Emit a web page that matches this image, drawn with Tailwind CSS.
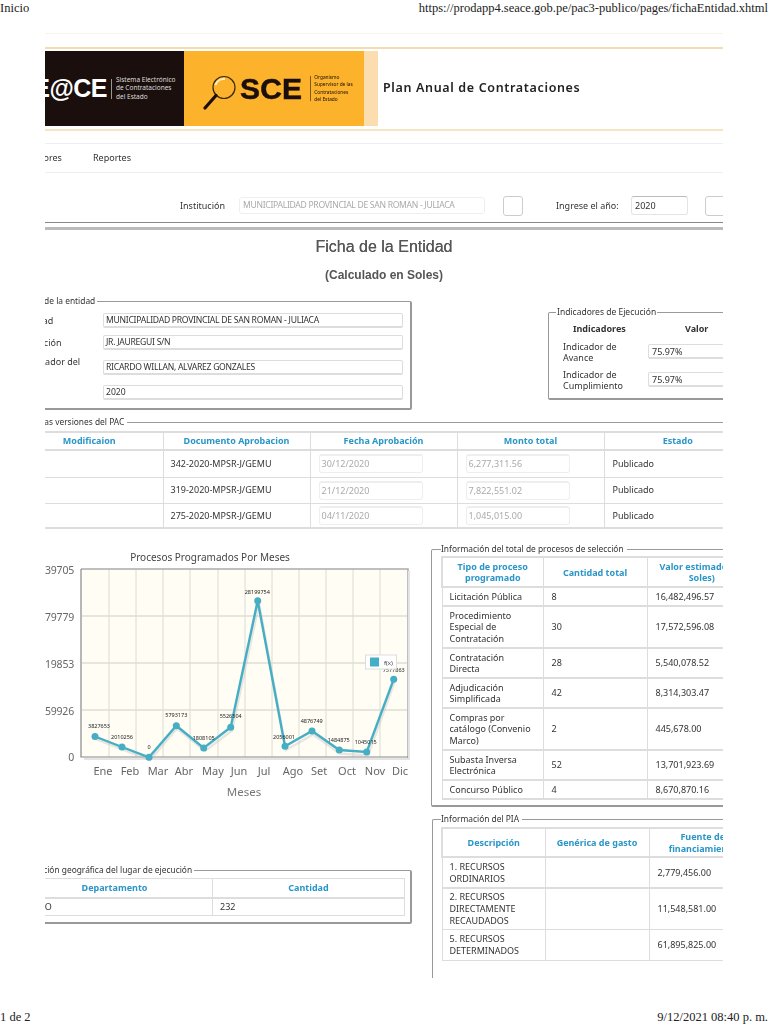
<!DOCTYPE html>
<html lang="es">
<head>
  <meta charset="UTF-8" />
  <title>Ficha de la Entidad</title>
  <script src="https://cdn.jsdelivr.net/npm/@tailwindcss/browser@4"></script>
</head>
<body class="bg-white">
<div class="w-[768px] h-[1024px] overflow-hidden flex flex-col justify-between font-['Noto_Sans',sans-serif] text-[9px] text-[#333]">

  <!-- print header -->
  <div class="h-[16px] flex justify-between font-['Liberation_Serif',serif] text-[12.5px] leading-[16px] text-[#222]">
    <span>Inicio</span>
    <span>https://prodapp4.seace.gob.pe/pac3-publico/pages/fichaEntidad.xhtml</span>
  </div>

  <!-- page -->
  <div class="ml-[45px] w-[678px] h-[945px] mb-auto mt-[17px] overflow-hidden blur-[0.45px]">
    <div class="h-px bg-[#f8f4ea]"></div>
    <div class="mt-[13px] h-[2px] bg-[#f3dcb4]"></div>

    <!-- banner -->
    <div class="mt-[2px] h-[75px] flex items-stretch">
      <div class="w-[139px] bg-[#1a0f0c] flex items-center justify-end overflow-hidden text-white">
        <span class="font-['Liberation_Sans',sans-serif] font-bold text-[25px] tracking-[-0.5px] shrink-0">SE@CE</span>
        <span class="w-px h-[20px] bg-[#998] mx-[4px] shrink-0"></span>
        <span class="w-[68px] shrink-0 text-[6.5px] leading-[8.5px] text-[#ddd] whitespace-nowrap">Sistema Electrónico<br>de Contrataciones<br>del Estado</span>
      </div>
      <div class="w-[180px] bg-[#fdb22b] flex items-center text-[#1a0f0c] pl-[19px]">
        <svg width="36" height="42" viewBox="0 0 36 42" class="shrink-0">
          <circle cx="21" cy="19.500" r="11" fill="#fdb22b" stroke="#3a2a10" stroke-width="1.2" />
          <path d="M12.500 17 A9 9 0 0 1 22 11" fill="none" stroke="#fff0c4" stroke-width="2" />
          <path d="M13 27.500 L2 40" stroke="#1a0f0c" stroke-width="3.200" stroke-linecap="round" />
        </svg>
        <span class="font-['Liberation_Sans',sans-serif] font-bold text-[30px] tracking-[0.2px] ml-[1px] shrink-0 [-webkit-text-stroke:0.5px_#1a0f0c]">SCE</span>
        <span class="w-px h-[25px] bg-[#7a5a14] ml-[8px] mr-[3px] shrink-0"></span>
        <span class="text-[4.800px] leading-[7.300px] whitespace-nowrap">Organismo<br>Supervisor de las<br>Contrataciones<br>del Estado</span>
      </div>
      <div class="w-[14px] bg-[#fcddaf]"></div>
      <div class="pl-[5px] self-center font-semibold text-[12.500px] text-[#222] tracking-[0.65px]">Plan Anual de Contrataciones</div>
    </div>
    <div class="mt-[3px] h-[2px] bg-[#f6e4c6]"></div>

    <!-- nav -->
    <div class="mt-[12px] h-[30px] border-y border-[#eee] flex items-center">
      <span class="-ml-[36px] w-[84px] shrink-0">Proveedores</span>
      <span>Reportes</span>
    </div>

    <!-- filter -->
    <div class="mt-[24px] h-[17px] flex items-center">
      <span class="ml-[135px] w-[59px] shrink-0">Institución</span>
      <div class="w-[246px] h-[17px] shrink-0 rounded-[3px] border border-[#eee] px-[3px] leading-[15px] text-[8.600px] tracking-[-0.3px] text-[#aaa] whitespace-nowrap">MUNICIPALIDAD PROVINCIAL DE SAN ROMAN - JULIACA</div>
      <div class="ml-[18px] w-[20px] h-[20px] shrink-0 rounded-[3px] border border-[#ccc]"></div>
      <span class="ml-[33px] w-[75px] shrink-0">Ingrese el año:</span>
      <div class="w-[57px] h-[19px] shrink-0 rounded-[3px] border border-[#e4e4e4] border-t-[#bbb] px-[3px] leading-[17px]">2020</div>
      <div class="ml-[17px] w-[24px] h-[20px] shrink-0 rounded-[3px] border border-[#ccc]"></div>
    </div>

    <div class="mt-[8px] h-px bg-[#888]"></div>
    <div class="mt-[4px] h-[3px] bg-[#bbb]"></div>

    <!-- titles -->
    <h1 class="mt-[8px] h-[18px] leading-[18px] text-center font-['Liberation_Sans',sans-serif] text-[16px] text-[#555] font-medium [text-shadow:0_0_0.6px_#555]">Ficha de la Entidad</h1>
    <h2 class="mt-[11px] h-[16px] leading-[16px] text-center font-['Liberation_Sans',sans-serif] text-[12px] font-bold text-[#555]">(Calculado en Soles)</h2>

    <!-- entity data + indicators -->
    <div class="flex items-start h-[117px] mt-[12px]">
      <fieldset class="-ml-[60px] w-[427px] h-[115px] shrink-0 border border-[#999] border-b-2 border-r-2 rounded-[2px]">
        <legend class="ml-[33px] leading-[12px] pr-[2px] text-[8.400px]">Datos de la entidad</legend>
        <div class="mt-[6px] flex items-center h-[15px]">
          <span class="w-[117px] pl-[35px] shrink-0">Entidad</span>
          <div class="w-[300px] h-[15px] rounded-[2px] border border-[#ddd] border-b-2 px-[2px] leading-[13px] text-[8.600px] tracking-[-0.27px] whitespace-nowrap">MUNICIPALIDAD PROVINCIAL DE SAN ROMAN - JULIACA</div>
        </div>
        <div class="mt-[7px] flex items-center h-[15px]">
          <span class="w-[117px] pl-[36px] shrink-0">Dirección</span>
          <div class="w-[300px] h-[15px] rounded-[2px] border border-[#ddd] border-b-2 px-[2px] leading-[13px] text-[8.600px] tracking-[-0.27px]">JR. JAUREGUI S/N</div>
        </div>
        <div class="mt-[10px] flex items-start h-[15px]">
          <span class="w-[117px] pl-[33px] shrink-0 leading-[12px] -mt-[4px]">Agrupador del</span>
          <div class="w-[300px] h-[15px] rounded-[2px] border border-[#ddd] border-b-2 px-[2px] leading-[13px] text-[8.600px] tracking-[-0.27px] whitespace-nowrap">RICARDO WILLAN, ALVAREZ GONZALES</div>
        </div>
        <div class="mt-[10px] flex items-center h-[15px]">
          <span class="w-[117px] pl-[36px] shrink-0">Año</span>
          <div class="w-[300px] h-[15px] rounded-[2px] border border-[#ddd] border-b-2 px-[2px] leading-[13px] text-[8.600px]">2020</div>
        </div>
      </fieldset>

      <fieldset class="ml-[136px] mt-[11px] w-[200px] h-[94px] shrink-0 border border-[#999] border-b-2 rounded-[2px]">
        <legend class="ml-[7px] leading-[12px] px-px text-[8.500px]">Indicadores de Ejecución</legend>
        <div class="flex h-[15px] mt-[3px] font-bold items-center">
          <span class="ml-[24px] w-[112px]">Indicadores</span>
          <span>Valor</span>
        </div>
        <div class="flex items-center h-[23px] mt-[4px] leading-[11px]">
          <span class="ml-[14px] w-[85px] shrink-0">Indicador de<br>Avance</span>
          <div class="w-[90px] h-[15px] shrink-0 rounded-[2px] border border-[#ddd] border-b-2 px-[3px] leading-[13px]">75.97%</div>
        </div>
        <div class="flex items-center h-[23px] mt-[5px] leading-[11px]">
          <span class="ml-[14px] w-[85px] shrink-0">Indicador de<br>Cumplimiento</span>
          <div class="w-[90px] h-[15px] shrink-0 rounded-[2px] border border-[#ddd] border-b-2 px-[3px] leading-[13px]">75.97%</div>
        </div>
      </fieldset>
    </div>

    <!-- PAC versions -->
    <fieldset class="mt-[4px] -ml-[60px] w-[800px] border-t border-[#999]">
      <legend class="ml-[38px] leading-[12px] pr-[3px] text-[8.400px]">Últimas versiones del PAC</legend>
      <table class="ml-[31px] mt-[3px] w-[735px] table-fixed border-collapse">
        <thead>
          <tr class="h-[18px] text-[#2a96c8] font-bold">
            <th class="border-y-2 border-[#ddd] border-r">Modificaion</th>
            <th class="border-y-2 border-[#ddd] border-r">Documento Aprobacion</th>
            <th class="border-y-2 border-[#ddd] border-r">Fecha Aprobación</th>
            <th class="border-y-2 border-[#ddd] border-r">Monto total</th>
            <th class="border-y-2 border-[#ddd]">Estado</th>
          </tr>
        </thead>
        <tbody>
          <tr class="h-[27px] border-b border-[#ddd]">
            <td class="border-r border-[#ddd]"></td>
            <td class="border-r border-[#ddd] pl-[7px]">342-2020-MPSR-J/GEMU</td>
            <td class="border-r border-[#ddd] pl-[8px]"><div class="w-[104px] h-[19px] rounded-[3px] border border-[#eee] border-t-2 px-[2px] leading-[16px] text-[#aaa]">30/12/2020</div></td>
            <td class="border-r border-[#ddd] pl-[8px]"><div class="w-[104px] h-[19px] rounded-[3px] border border-[#eee] border-t-2 px-[2px] leading-[16px] text-[#aaa]">6,277,311.56</div></td>
            <td class="pl-[8px]">Publicado</td>
          </tr>
          <tr class="h-[26px] border-b border-[#ddd]">
            <td class="border-r border-[#ddd]"></td>
            <td class="border-r border-[#ddd] pl-[7px]">319-2020-MPSR-J/GEMU</td>
            <td class="border-r border-[#ddd] pl-[8px]"><div class="w-[104px] h-[19px] rounded-[3px] border border-[#eee] border-t-2 px-[2px] leading-[16px] text-[#aaa]">21/12/2020</div></td>
            <td class="border-r border-[#ddd] pl-[8px]"><div class="w-[104px] h-[19px] rounded-[3px] border border-[#eee] border-t-2 px-[2px] leading-[16px] text-[#aaa]">7,822,551.02</div></td>
            <td class="pl-[8px]">Publicado</td>
          </tr>
          <tr class="h-[25px] border-b-2 border-[#ddd]">
            <td class="border-r border-[#ddd]"></td>
            <td class="border-r border-[#ddd] pl-[7px]">275-2020-MPSR-J/GEMU</td>
            <td class="border-r border-[#ddd] pl-[8px]"><div class="w-[104px] h-[19px] rounded-[3px] border border-[#eee] border-t-2 px-[2px] leading-[16px] text-[#aaa]">04/11/2020</div></td>
            <td class="border-r border-[#ddd] pl-[8px]"><div class="w-[104px] h-[19px] rounded-[3px] border border-[#eee] border-t-2 px-[2px] leading-[16px] text-[#aaa]">1,045,015.00</div></td>
            <td class="pl-[8px]">Publicado</td>
          </tr>
        </tbody>
      </table>
    </fieldset>

    <!-- lower columns -->
    <div class="flex items-start">
      <div class="w-[387px] shrink-0">
        <svg class="mt-[11px] block" width="385" height="260" viewBox="45 540 385 260" font-family="Noto Sans, sans-serif">
          <text x="210" y="561" text-anchor="middle" font-size="10" fill="#444">Procesos Programados Por Meses</text>
          <rect x="82" y="569" width="325" height="188" fill="#fffdf4" />
          <g stroke="#dcdcd2" stroke-width="1">
            <path d="M82 616H407M82 663H407M82 710H407" stroke="#cfcfc6" />
            <path d="M109 569V757M136 569V757M163 569V757M190 569V757M218 569V757M245 569V757M272 569V757M299 569V757M326 569V757M353 569V757M380 569V757" />
          </g>
          <path d="M81 569H408V758" fill="none" stroke="#aaa" stroke-width="1.500" />
          <path d="M81 569V757H408" fill="none" stroke="#888" stroke-width="1.200" />
          <path d="M409 571V759H84" fill="none" stroke="#e4e4e4" stroke-width="2" />
          <g font-size="10.500" letter-spacing="-0.2" fill="#666" text-anchor="end">
            <text x="74" y="574">28239705</text>
            <text x="74" y="621">21179779</text>
            <text x="74" y="668">14119853</text>
            <text x="74" y="715">7059926</text>
            <text x="74" y="761">0</text>
          </g>
          <path d="M95 738L122 748.500L149 759L176 727.500L204 750L231 729.500L258 602.500L285 749L312 733.500L339 752.500L367 754.500L394 679.500" transform="translate(1 1)" fill="none" stroke="#bbb" stroke-width="2.500" opacity="0.35" />
          <path d="M95 736.500L122 747L149 757.300L176.300 725.700L203.700 748L230.700 727.300L257.700 600.700L285 746.300L312 731L339.300 750L366.700 752L393.700 679.300" fill="none" stroke="#45aec4" stroke-width="2.400" />
          <g fill="#45aec4">
            <circle cx="95" cy="736.500" r="3.500" /><circle cx="122" cy="747" r="3.500" /><circle cx="149" cy="757.300" r="3.500" /><circle cx="176.300" cy="725.700" r="3.500" /><circle cx="203.700" cy="748" r="3.500" /><circle cx="230.700" cy="727.300" r="3.500" /><circle cx="257.700" cy="600.700" r="3.500" /><circle cx="285" cy="746.300" r="3.500" /><circle cx="312" cy="731" r="3.500" /><circle cx="339.300" cy="750" r="3.500" /><circle cx="366.700" cy="752" r="3.500" /><circle cx="393.700" cy="679.300" r="3.500" />
          </g>
          <g font-size="5.500" fill="#222" text-anchor="middle">
            <text x="99" y="728">3827653</text>
            <text x="122" y="738.500">2010256</text>
            <text x="149" y="749">0</text>
            <text x="176.300" y="717">5793173</text>
            <text x="203.700" y="740">1808105</text>
            <text x="230.700" y="718">5526504</text>
            <text x="257.300" y="594">28199754</text>
            <text x="284" y="738.500">2056001</text>
            <text x="311.700" y="723">4876749</text>
            <text x="338.700" y="741.500">1484875</text>
            <text x="365.700" y="743.500">1045015</text>
            <text x="393.700" y="671.500">7577863</text>
          </g>
          <rect x="365.500" y="655" width="31" height="14" fill="#fff" stroke="#ddd" />
          <rect x="370" y="657.500" width="9" height="9" fill="#45aec4" />
          <text x="384" y="664.500" font-size="6" fill="#444">f(x)</text>
          <g font-size="11" fill="#666" text-anchor="middle">
            <text x="103" y="775">Ene</text><text x="130" y="775">Feb</text><text x="158" y="775">Mar</text><text x="184" y="775">Abr</text><text x="213" y="775">May</text><text x="239" y="775">Jun</text><text x="264" y="775">Jul</text><text x="293" y="775">Ago</text><text x="319" y="775">Set</text><text x="347" y="775">Oct</text><text x="375" y="775">Nov</text><text x="400" y="775">Dic</text>
          </g>
          <text x="244" y="796" font-size="11.500" fill="#777" text-anchor="middle">Meses</text>
        </svg>

        <fieldset class="mt-[64px] -ml-[50px] w-[417px] h-[60px] border border-[#999] border-b-2 border-r-2 rounded-[2px]">
          <legend class="ml-[25px] leading-[12px] pr-[2px] whitespace-nowrap text-[8.400px]">Ubicación geográfica del lugar de ejecución</legend>
          <table class="ml-[20px] mt-[2px] w-[389px] table-fixed border-collapse border border-[#ddd]">
            <tbody>
              <tr class="h-[19px] text-[#2a96c8] font-bold text-center border-b-2 border-[#ddd]">
                <th class="w-[196px] border-r border-[#ddd]">Departamento</th>
                <th>Cantidad</th>
              </tr>
              <tr class="h-[18px]">
                <td class="border-r border-[#ddd] pl-[9px]">PUNO</td>
                <td class="pl-[7px]">232</td>
              </tr>
            </tbody>
          </table>
        </fieldset>
      </div>

      <div class="w-[300px] shrink-0">
        <fieldset class="mt-[14px] w-[340px] -ml-[1px] h-[264px] border border-[#999] border-b-2 rounded-[2px]">
          <legend class="ml-[9px] leading-[12px] pr-[3px] whitespace-nowrap text-[8.400px]">Información del total de procesos de selección</legend>
          <table class="ml-[9px] mt-[1px] w-[315px] table-fixed border-collapse">
            <thead>
              <tr class="h-[30px] text-[#2a96c8] font-bold text-center leading-[11px]">
                <th class="w-[101px] border-2 border-[#ddd] border-r">Tipo de proceso programado</th>
                <th class="w-[104px] border-y-2 border-r border-[#ddd]">Cantidad total</th>
                <th class="border-y-2 border-[#ddd]">Valor estimado (en Soles)</th>
              </tr>
            </thead>
            <tbody class="leading-[11.500px]">
              <tr class="h-[19px] border-b-2 border-[#ddd]"><td class="border-x border-[#ddd] pl-[7px]">Licitación Pública</td><td class="border-r border-[#ddd] pl-[8px]">8</td><td class="pl-[8px]">16,482,496.57</td></tr>
              <tr class="h-[42px] border-b-2 border-[#ddd]"><td class="border-x border-[#ddd] pl-[7px]">Procedimiento Especial de Contratación</td><td class="border-r border-[#ddd] pl-[8px]">30</td><td class="pl-[8px]">17,572,596.08</td></tr>
              <tr class="h-[30px] border-b-2 border-[#ddd]"><td class="border-x border-[#ddd] pl-[7px]">Contratación<br>Directa</td><td class="border-r border-[#ddd] pl-[8px]">28</td><td class="pl-[8px]">5,540,078.52</td></tr>
              <tr class="h-[30px] border-b-2 border-[#ddd]"><td class="border-x border-[#ddd] pl-[7px]">Adjudicación<br>Simplificada</td><td class="border-r border-[#ddd] pl-[8px]">42</td><td class="pl-[8px]">8,314,303.47</td></tr>
              <tr class="h-[42px] border-b-2 border-[#ddd]"><td class="border-x border-[#ddd] pl-[7px]">Compras por catálogo (Convenio Marco)</td><td class="border-r border-[#ddd] pl-[8px]">2</td><td class="pl-[8px]">445,678.00</td></tr>
              <tr class="h-[30px] border-b-2 border-[#ddd]"><td class="border-x border-[#ddd] pl-[7px]">Subasta Inversa<br>Electrónica</td><td class="border-r border-[#ddd] pl-[8px]">52</td><td class="pl-[8px]">13,701,923.69</td></tr>
              <tr class="h-[19px] border-b-2 border-[#ddd]"><td class="border-x border-[#ddd] pl-[7px]">Concurso Público</td><td class="border-r border-[#ddd] pl-[8px]">4</td><td class="pl-[8px]">8,670,870.16</td></tr>
            </tbody>
          </table>
        </fieldset>

        <fieldset class="mt-[6px] w-[340px] h-[165px] border-l border-t border-[#999] rounded-tl-[2px]">
          <legend class="ml-[8px] leading-[12px] pr-[3px] text-[8.400px]">Información del PIA</legend>
          <table class="ml-[8px] mt-[2px] w-[315px] table-fixed border-collapse">
            <thead>
              <tr class="h-[29px] text-[#2a96c8] font-bold text-center leading-[12px]">
                <th class="w-[103px] border-2 border-[#ddd] border-r">Descripción</th>
                <th class="w-[104px] border-y-2 border-r border-[#ddd]">Genérica de gasto</th>
                <th class="border-y-2 border-[#ddd]">Fuente de financiamiento</th>
              </tr>
            </thead>
            <tbody class="leading-[12px]">
              <tr class="h-[31px] border-b-2 border-[#ddd]"><td class="border-x border-[#ddd] pl-[7px]">1. RECURSOS ORDINARIOS</td><td class="border-r border-[#ddd]"></td><td class="pl-[8px]">2,779,456.00</td></tr>
              <tr class="h-[41px] border-b border-[#ddd]"><td class="border-x border-[#ddd] pl-[7px]">2. RECURSOS DIRECTAMENTE RECAUDADOS</td><td class="border-r border-[#ddd]"></td><td class="pl-[8px]">11,548,581.00</td></tr>
              <tr class="h-[31px] border-b border-[#ddd]"><td class="border-x border-[#ddd] pl-[7px]">5. RECURSOS DETERMINADOS</td><td class="border-r border-[#ddd]"></td><td class="pl-[8px]">61,895,825.00</td></tr>
            </tbody>
          </table>
        </fieldset>
      </div>
    </div>
  </div>

  <!-- print footer -->
  <div class="h-[16px] flex justify-between font-['Liberation_Serif',serif] text-[12.5px] leading-[18px] text-[#222]">
    <span>1 de 2</span>
    <span>9/12/2021 08:40 p. m.</span>
  </div>
</div>
</body>
</html>
